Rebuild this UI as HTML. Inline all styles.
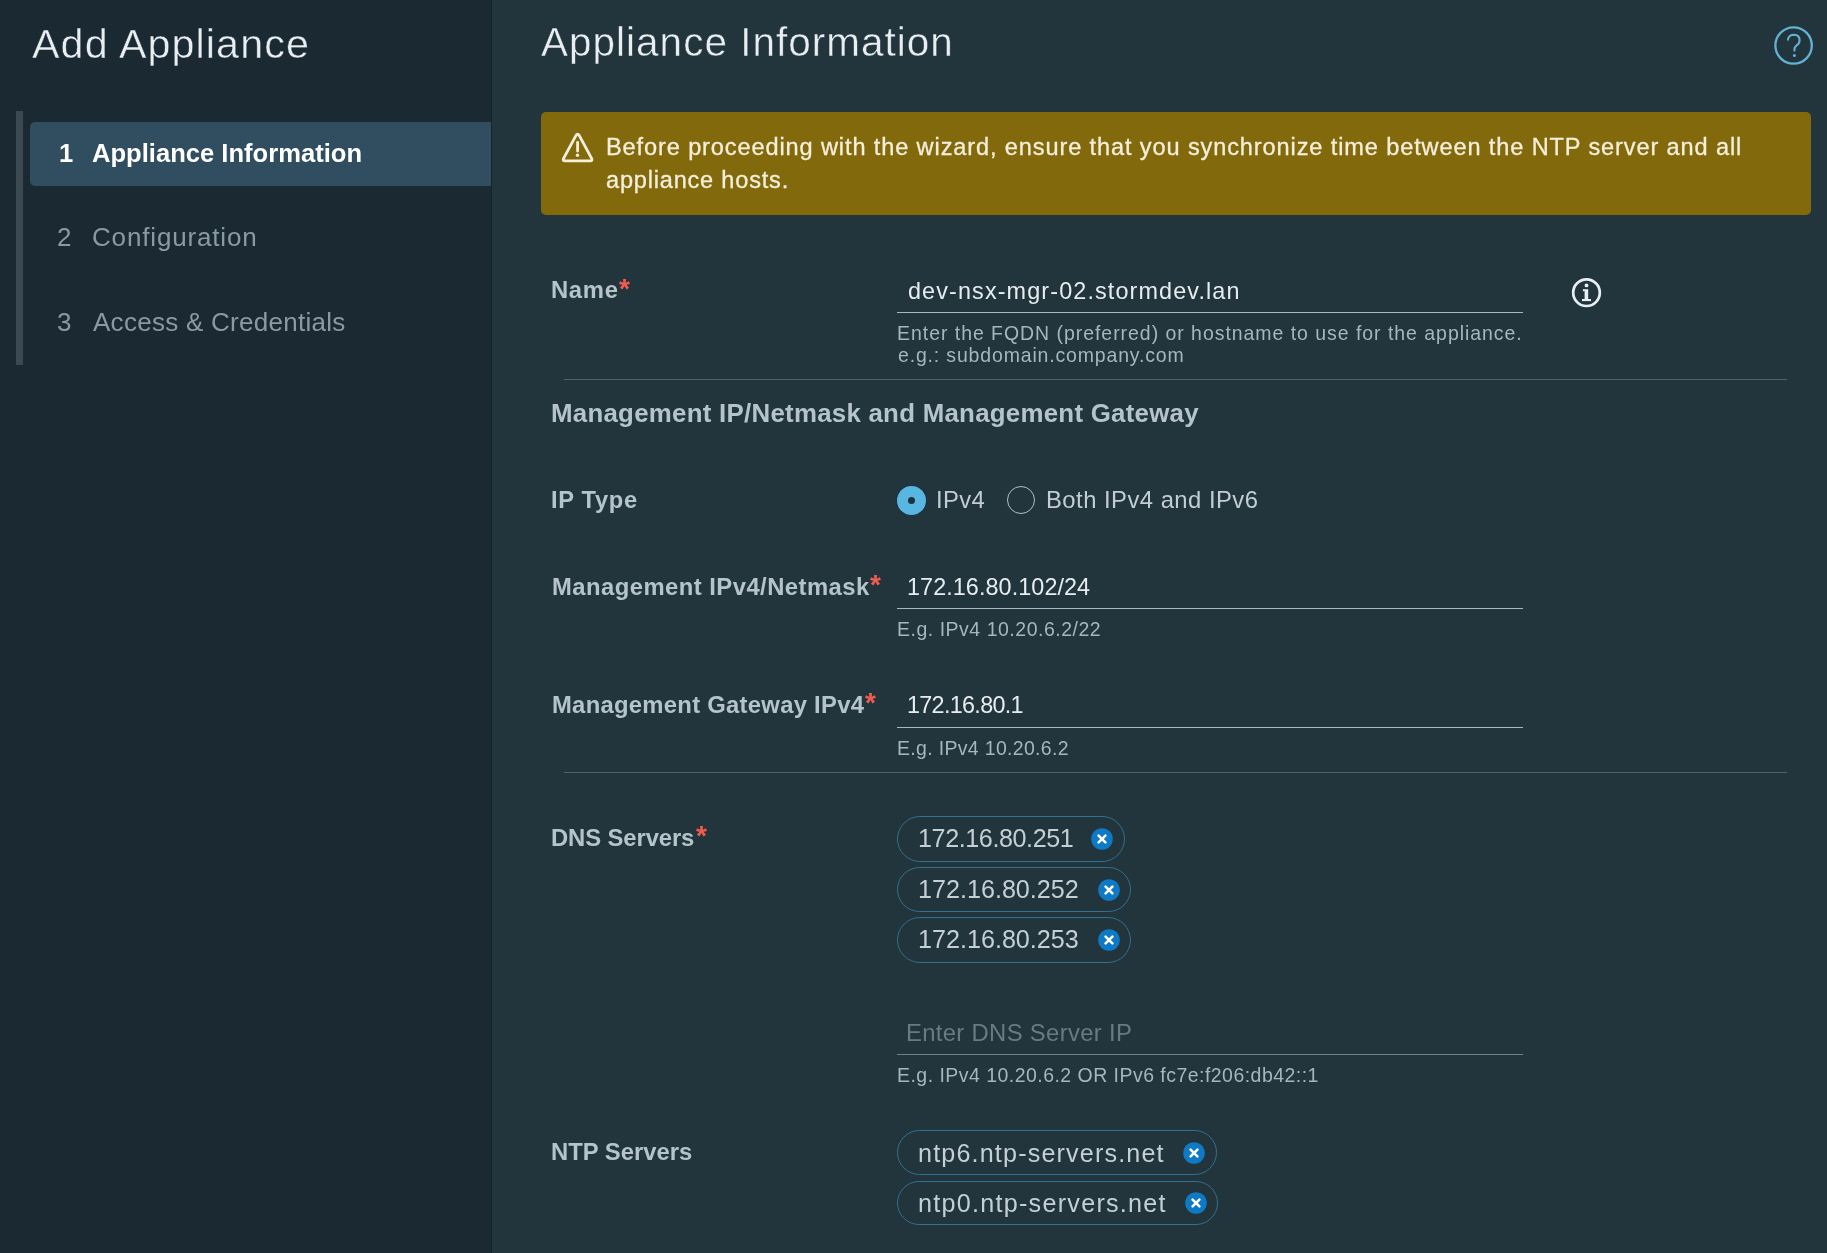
<!DOCTYPE html>
<html><head><meta charset="utf-8"><title>Add Appliance</title>
<style>
html,body{margin:0;padding:0;width:1827px;height:1253px;overflow:hidden;background:#22343c;font-family:"Liberation Sans",sans-serif;}
.t{position:absolute;white-space:nowrap;will-change:transform;}
.r{position:absolute;}
.pill{box-sizing:border-box;border:1px solid #33708f;border-radius:24px;}

</style></head><body>
<div class="r" style="left:0;top:0;width:491px;height:1253px;background:#1b2a32"></div>
<div class="r" style="left:491px;top:0;width:1px;height:1253px;background:#15242c"></div>
<div class="r" style="left:16px;top:111px;width:7px;height:254px;background:#3a4952"></div>
<div class="r" style="left:30px;top:122px;width:461px;height:64px;background:#314e60;border-radius:5px 0 0 5px"></div>
<svg class="r" style="left:1770px;top:22px" width="48" height="48" viewBox="0 0 48 48">
 <circle cx="23.6" cy="23.5" r="18.2" fill="none" stroke="#62b2d4" stroke-width="2.3"/>
 <path d="M17.9 17.6 Q18.8 12.8 24 12.8 Q29.6 13 29.6 18.2 Q29.6 21.4 26.6 23.3 Q24.4 24.8 24.4 27.8 L24.4 28.6" fill="none" stroke="#62b2d4" stroke-width="2.1" stroke-linecap="round"/>
 <circle cx="24.4" cy="33.4" r="1.5" fill="#62b2d4"/>
</svg>
<div class="r" style="left:541px;top:112px;width:1270px;height:103px;background:#826a0c;border-radius:5px"></div>
<svg class="r" style="left:558px;top:128px" width="40" height="40" viewBox="0 0 40 40">
 <path d="M17.9 7.6 Q19.6 4.9 21.3 7.6 L33.6 30.4 Q34.8 32.8 32.2 32.8 L7 32.8 Q4.4 32.8 5.6 30.4 Z" fill="none" stroke="#f6efdc" stroke-width="2.8" stroke-linejoin="round"/>
 <line x1="19.6" y1="14.3" x2="19.6" y2="23" stroke="#f6efdc" stroke-width="2.8" stroke-linecap="round"/>
 <circle cx="19.5" cy="27.3" r="1.7" fill="#f6efdc"/>
</svg>
<div class="r" style="left:564px;top:379px;width:1223px;height:1px;background:#4d616b"></div>
<div class="r" style="left:564px;top:772px;width:1223px;height:1px;background:#4d616b"></div>
<div class="r" style="left:897px;top:312px;width:626px;height:1px;background:#a9b8bf"></div>
<div class="r" style="left:897px;top:608px;width:626px;height:1px;background:#a9b8bf"></div>
<div class="r" style="left:897px;top:727px;width:626px;height:1px;background:#a9b8bf"></div>
<div class="r" style="left:897px;top:1054px;width:626px;height:1px;background:#6f8089"></div>
<svg class="r" style="left:1566px;top:272px" width="42" height="42" viewBox="0 0 42 42">
 <circle cx="20.5" cy="20.7" r="13.3" fill="none" stroke="#e8eef1" stroke-width="2.7"/>
 <circle cx="20.5" cy="13.4" r="1.9" fill="#e8eef1"/>
 <rect x="18.6" y="17.2" width="3.6" height="11.8" fill="#e8eef1"/>
 <rect x="16.9" y="17.2" width="2" height="2" fill="#e8eef1"/>
 <rect x="16" y="27" width="9" height="2.1" fill="#e8eef1"/>
</svg>
<div class="r" style="left:896px;top:485px;width:31px;height:31px;border-radius:50%;background:#1a3442"></div>
<div class="r" style="left:897px;top:486px;width:29px;height:29px;border-radius:50%;background:#59b6e0"></div>
<div class="r" style="left:907.8px;top:496.8px;width:7px;height:7px;border-radius:50%;background:#1b3340"></div>
<div class="r" style="left:1007px;top:486px;width:28px;height:28px;border-radius:50%;border:1.2px solid #b3c0c6;box-sizing:border-box"></div>
<div class="r pill" style="left:897px;top:816px;width:228px;height:46px"></div>
<div class="r pill" style="left:897px;top:867px;width:234px;height:45px"></div>
<div class="r pill" style="left:897px;top:917px;width:234px;height:46px"></div>
<div class="r pill" style="left:897px;top:1130px;width:320px;height:45px"></div>
<div class="r pill" style="left:897px;top:1181px;width:321px;height:44px"></div>
<svg class="r" style="left:1091px;top:828px" width="22" height="22" viewBox="0 0 22 22"><circle cx="11" cy="11" r="10.8" fill="#0e79c5"/><path d="M7.6 7.6 L14.4 14.4 M14.4 7.6 L7.6 14.4" stroke="#ffffff" stroke-width="2.6" stroke-linecap="round"/></svg>
<svg class="r" style="left:1097.5px;top:879px" width="22" height="22" viewBox="0 0 22 22"><circle cx="11" cy="11" r="10.8" fill="#0e79c5"/><path d="M7.6 7.6 L14.4 14.4 M14.4 7.6 L7.6 14.4" stroke="#ffffff" stroke-width="2.6" stroke-linecap="round"/></svg>
<svg class="r" style="left:1097.5px;top:929px" width="22" height="22" viewBox="0 0 22 22"><circle cx="11" cy="11" r="10.8" fill="#0e79c5"/><path d="M7.6 7.6 L14.4 14.4 M14.4 7.6 L7.6 14.4" stroke="#ffffff" stroke-width="2.6" stroke-linecap="round"/></svg>
<svg class="r" style="left:1183px;top:1141.5px" width="22" height="22" viewBox="0 0 22 22"><circle cx="11" cy="11" r="10.8" fill="#0e79c5"/><path d="M7.6 7.6 L14.4 14.4 M14.4 7.6 L7.6 14.4" stroke="#ffffff" stroke-width="2.6" stroke-linecap="round"/></svg>
<svg class="r" style="left:1184.5px;top:1192px" width="22" height="22" viewBox="0 0 22 22"><circle cx="11" cy="11" r="10.8" fill="#0e79c5"/><path d="M7.6 7.6 L14.4 14.4 M14.4 7.6 L7.6 14.4" stroke="#ffffff" stroke-width="2.6" stroke-linecap="round"/></svg>


<div class="t" id="t1" style="left:31.70px;top:24.40px;font-size:41.28px;line-height:41.28px;letter-spacing:1.083px;font-weight:400;color:#e8eef2;-webkit-text-stroke:0.45px #1b2a32">Add Appliance</div>
<div class="t" id="s1n" style="left:58.60px;top:140.81px;font-size:25.58px;line-height:25.58px;letter-spacing:-10.000px;font-weight:700;color:#ffffff">1</div>
<div class="t" id="s1" style="left:92.00px;top:140.81px;font-size:25.58px;line-height:25.58px;letter-spacing:0.000px;font-weight:700;color:#ffffff">Appliance Information</div>
<div class="t" id="s2n" style="left:56.50px;top:224.32px;font-size:26.02px;line-height:26.02px;letter-spacing:5.000px;font-weight:400;color:#8a9aa3">2</div>
<div class="t" id="s2" style="left:91.50px;top:224.32px;font-size:26.02px;line-height:26.02px;letter-spacing:0.833px;font-weight:400;color:#8a9aa3">Configuration</div>
<div class="t" id="s3n" style="left:56.50px;top:308.90px;font-size:26.02px;line-height:26.02px;letter-spacing:-3.000px;font-weight:400;color:#8a9aa3">3</div>
<div class="t" id="s3" style="left:93.40px;top:308.90px;font-size:26.02px;line-height:26.02px;letter-spacing:0.263px;font-weight:400;color:#8a9aa3">Access &amp; Credentials</div>
<div class="t" id="mt" style="left:540.60px;top:21.81px;font-size:40.41px;line-height:40.41px;letter-spacing:1.050px;font-weight:400;color:#e8eef2;-webkit-text-stroke:0.45px #22343c">Appliance Information</div>
<div class="t" id="al1" style="left:606.10px;top:136.00px;font-size:23.55px;line-height:23.55px;letter-spacing:0.887px;font-weight:400;color:#f6efdc;-webkit-text-stroke:0.3px #f6efdc">Before proceeding with the wizard, ensure that you synchronize time between the NTP server and all</div>
<div class="t" id="al2" style="left:606.40px;top:168.82px;font-size:23.55px;line-height:23.55px;letter-spacing:0.800px;font-weight:400;color:#f6efdc;-webkit-text-stroke:0.3px #f6efdc">appliance hosts.</div>
<div class="t" id="name" style="left:551.20px;top:278.10px;font-size:23.84px;line-height:23.84px;letter-spacing:0.667px;font-weight:700;color:#b5c3ca">Name</div>
<div class="t" id="in1" style="left:907.60px;top:279.91px;font-size:23.40px;line-height:23.40px;letter-spacing:1.115px;font-weight:400;color:#e6edf0">dev-nsx-mgr-02.stormdev.lan</div>
<div class="t" id="h1a" style="left:896.70px;top:323.91px;font-size:19.48px;line-height:19.48px;letter-spacing:0.968px;font-weight:400;color:#a7b6bd">Enter the FQDN (preferred) or hostname to use for the appliance.</div>
<div class="t" id="h1b" style="left:897.70px;top:345.61px;font-size:19.48px;line-height:19.48px;letter-spacing:0.846px;font-weight:400;color:#a7b6bd">e.g.: subdomain.company.com</div>
<div class="t" id="head" style="left:550.50px;top:401.00px;font-size:25.87px;line-height:25.87px;letter-spacing:0.256px;font-weight:700;color:#b5c3ca">Management IP/Netmask and Management Gateway</div>
<div class="t" id="ipt" style="left:551.30px;top:489.10px;font-size:23.69px;line-height:23.69px;letter-spacing:0.667px;font-weight:700;color:#b5c3ca">IP Type</div>
<div class="t" id="r1t" style="left:935.80px;top:488.00px;font-size:23.84px;line-height:23.84px;letter-spacing:0.333px;font-weight:400;color:#c2ced4">IPv4</div>
<div class="t" id="r2t" style="left:1045.60px;top:488.00px;font-size:23.84px;line-height:23.84px;letter-spacing:0.471px;font-weight:400;color:#c2ced4">Both IPv4 and IPv6</div>
<div class="t" id="mip" style="left:551.80px;top:575.10px;font-size:23.84px;line-height:23.84px;letter-spacing:0.455px;font-weight:700;color:#b5c3ca">Management IPv4/Netmask</div>
<div class="t" id="in2" style="left:906.50px;top:575.91px;font-size:23.40px;line-height:23.40px;letter-spacing:0.067px;font-weight:400;color:#e6edf0">172.16.80.102/24</div>
<div class="t" id="h2" style="left:896.60px;top:620.31px;font-size:19.48px;line-height:19.48px;letter-spacing:0.524px;font-weight:400;color:#a7b6bd">E.g. IPv4 10.20.6.2/22</div>
<div class="t" id="mgw" style="left:551.80px;top:693.10px;font-size:23.84px;line-height:23.84px;letter-spacing:0.273px;font-weight:700;color:#b5c3ca">Management Gateway IPv4</div>
<div class="t" id="in3" style="left:906.50px;top:694.41px;font-size:23.40px;line-height:23.40px;letter-spacing:-0.700px;font-weight:400;color:#e6edf0">172.16.80.1</div>
<div class="t" id="h3" style="left:896.60px;top:738.81px;font-size:19.48px;line-height:19.48px;letter-spacing:0.333px;font-weight:400;color:#a7b6bd">E.g. IPv4 10.20.6.2</div>
<div class="t" id="dns" style="left:551.00px;top:825.50px;font-size:23.84px;line-height:23.84px;letter-spacing:-0.100px;font-weight:700;color:#b5c3ca">DNS Servers</div>
<div class="t" id="p1" style="left:918.20px;top:825.71px;font-size:25.15px;line-height:25.15px;letter-spacing:-0.417px;font-weight:400;color:#c4d0d6">172.16.80.251</div>
<div class="t" id="p2" style="left:918.20px;top:877.01px;font-size:25.15px;line-height:25.15px;letter-spacing:0.000px;font-weight:400;color:#c4d0d6">172.16.80.252</div>
<div class="t" id="p3" style="left:918.20px;top:927.01px;font-size:25.15px;line-height:25.15px;letter-spacing:0.000px;font-weight:400;color:#c4d0d6">172.16.80.253</div>
<div class="t" id="ph" style="left:906.20px;top:1021.00px;font-size:23.84px;line-height:23.84px;letter-spacing:0.333px;font-weight:400;color:#6a7a82">Enter DNS Server IP</div>
<div class="t" id="h4" style="left:896.60px;top:1065.81px;font-size:19.48px;line-height:19.48px;letter-spacing:0.477px;font-weight:400;color:#a7b6bd">E.g. IPv4 10.20.6.2 OR IPv6 fc7e:f206:db42::1</div>
<div class="t" id="ntp" style="left:550.90px;top:1139.80px;font-size:23.84px;line-height:23.84px;letter-spacing:0.000px;font-weight:700;color:#b5c3ca">NTP Servers</div>
<div class="t" id="n1" style="left:918.40px;top:1140.61px;font-size:25.15px;line-height:25.15px;letter-spacing:1.158px;font-weight:400;color:#c4d0d6">ntp6.ntp-servers.net</div>
<div class="t" id="n2" style="left:918.40px;top:1191.01px;font-size:25.15px;line-height:25.15px;letter-spacing:1.263px;font-weight:400;color:#c4d0d6">ntp0.ntp-servers.net</div>
<div class="t" id="a1" style="left:618.70px;top:274.70px;font-size:28.00px;line-height:28.00px;font-weight:700;color:#f25c4f">*</div>
<div class="t" id="a2" style="left:869.50px;top:571.25px;font-size:28.00px;line-height:28.00px;font-weight:700;color:#f25c4f">*</div>
<div class="t" id="a3" style="left:864.50px;top:689.25px;font-size:28.00px;line-height:28.00px;font-weight:700;color:#f25c4f">*</div>
<div class="t" id="a4" style="left:695.55px;top:822.00px;font-size:28.00px;line-height:28.00px;font-weight:700;color:#f25c4f">*</div>
</body></html>
